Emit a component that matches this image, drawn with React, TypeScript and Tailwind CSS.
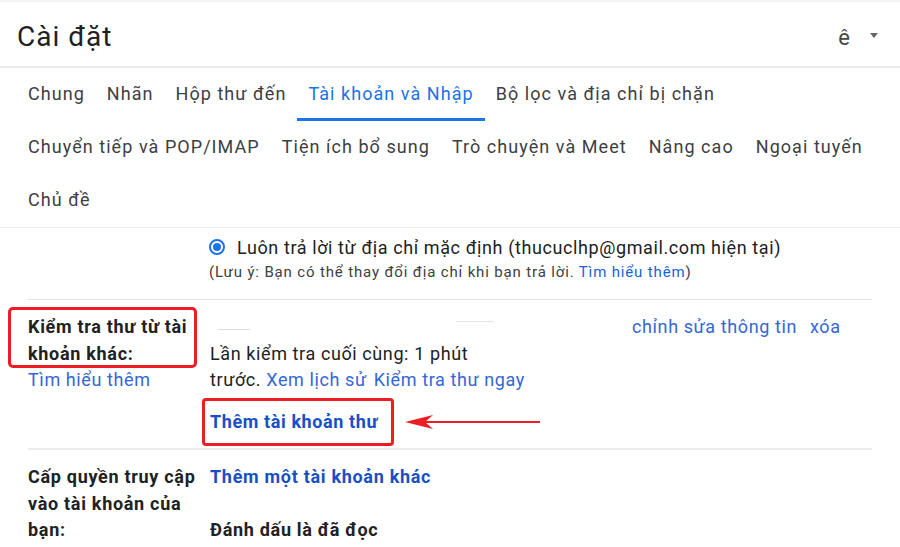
import React from 'react'

const FONT = { fontFamily: 'Roboto, "Noto Sans", Arial, sans-serif' }

const TAB_ROWS = [
  ['Chung', 'Nhãn', 'Hộp thư đến', 'Tài khoản và Nhập', 'Bộ lọc và địa chỉ bị chặn'],
  ['Chuyển tiếp và POP/IMAP', 'Tiện ích bổ sung', 'Trò chuyện và Meet', 'Nâng cao', 'Ngoại tuyến'],
  ['Chủ đề'],
]

const ACTIVE = 'Tài khoản và Nhập'

export default function App() {
  return (
    <div className="w-[900px] h-[547px] overflow-hidden bg-white text-[#202124]" style={FONT}>
      {/* Header */}
      <div className="h-[68px] border-t-2 border-gray-100 border-b-2 border-b-[#ececec] flex items-center justify-between pl-[17px] pr-[22px]">
        <h1 className="text-[28px] tracking-[1px] text-[#202124] leading-none mt-[6px]">Cài đặt</h1>
        <div className="flex items-center gap-5 mt-[6px]">
          <span className="text-[22px] text-[#444]">ê</span>
          <svg width="8" height="5" viewBox="0 0 8 5" className="-mt-1">
            <path d="M0 0h8L4 5z" fill="#666" />
          </svg>
        </div>
      </div>

      {/* Tabs */}
      <div className="px-[17px]">
        {TAB_ROWS.map((row, i) => (
          <div key={i} className="flex h-[53px]">
            {row.map(t => {
              const active = t === ACTIVE
              return (
                <div
                  key={t}
                  className={`px-[11px] flex items-center text-[18px] tracking-[1.05px] border-b-[3px] ${active ? 'text-[#1a73e8] border-[#1a73e8]' : 'text-[#3c4043] border-transparent'}`}
                >
                  <span className="-mb-[3px] -mt-[2px]">{t}</span>
                </div>
              )
            })}
          </div>
        ))}
      </div>

      <div className="border-t border-[#eeeeee]" />

      {/* Reply-from section (scrolled) */}
      <div className="pl-[209px] pt-[6px] pb-[15px]">
        <div className="flex items-center gap-[12px] h-[26px]">
          <span className="w-[16px] h-[16px] rounded-full border-2 border-[#1a73e8] flex items-center justify-center">
            <span className="w-[8px] h-[8px] rounded-full bg-[#1a73e8]" />
          </span>
          <span className="text-[18px] tracking-[0.6px] text-[#202124]">Luôn trả lời từ địa chỉ mặc định (thucuclhp@gmail.com hiện tại)</span>
        </div>
        <div className="text-[15px] tracking-[0.85px] leading-[24px] text-[#3c4043]">
          (Lưu ý: Bạn có thể thay đổi địa chỉ khi bạn trả lời. <span className="text-[#1a5fd8]">Tìm hiểu thêm</span>)
        </div>
      </div>

      {/* Check mail from other accounts */}
      <div className="mx-[28px] border-t border-[#e3e3e3] pt-[14px] pb-[13px] flex text-[18px] tracking-[0.6px] leading-[26.5px]">
        <div className="w-[182px] shrink-0">
          <div className="relative font-bold tracking-[0.7px]">
            <div>Kiểm tra thư từ tài</div>
            <div>khoản khác:</div>
            <div className="absolute -left-[20px] -top-[7px] w-[189px] h-[61px] border-[3px] border-[#ee1c24] rounded-[5px]" />
          </div>
          <div className="text-[#3367d6]">Tìm hiểu thêm</div>
        </div>
        <div className="flex-1">
          <div className="flex h-[26.5px] items-center">
            <div className="w-[422px] flex items-center">
              <span className="ml-[8px] w-[32px] h-px bg-[#dddddd] mt-1" />
              <span className="ml-[206px] w-[38px] h-px bg-[#e4e4e4] -mt-3" />
            </div>
            <span className="text-[#3367d6]">chỉnh sửa thông tin</span>
            <span className="text-[#3367d6] ml-[13px]">xóa</span>
          </div>
          <div>Lần kiểm tra cuối cùng: 1 phút</div>
          <div>
            trước. <span className="text-[#3367d6]">Xem lịch sử</span>
            <span className="text-[#3367d6] ml-[7px]">Kiểm tra thư ngay</span>
          </div>
          <div className="relative mt-[15px] font-bold text-[#1a4fc4] w-fit">
            Thêm tài khoản thư
            <div className="absolute -left-[8px] -top-[11px] -right-[16px] -bottom-[11px] border-[3px] border-[#ee1c24] rounded-[4px]" />
            <svg className="absolute left-[calc(100%+27px)] top-[3px]" width="136" height="20" viewBox="0 0 136 20">
              <path d="M14 10 H135" stroke="#ee1c24" strokeWidth="2" />
              <path d="M0 10 L28 3 L20 10 L28 17 Z" fill="#ee1c24" />
            </svg>
          </div>
        </div>
      </div>

      {/* Grant access */}
      <div className="mx-[28px] border-t-2 border-[#ececec] pt-[14px] flex text-[18px] tracking-[0.7px] leading-[26.5px] font-bold">
        <div className="w-[182px] shrink-0">
          <div>Cấp quyền truy cập</div>
          <div>vào tài khoản của</div>
          <div>bạn:</div>
        </div>
        <div className="flex-1">
          <div className="text-[#1a4fc4]">Thêm một tài khoản khác</div>
          <div className="h-[26.5px]" />
          <div>Đánh dấu là đã đọc</div>
        </div>
      </div>
    </div>
  )
}
